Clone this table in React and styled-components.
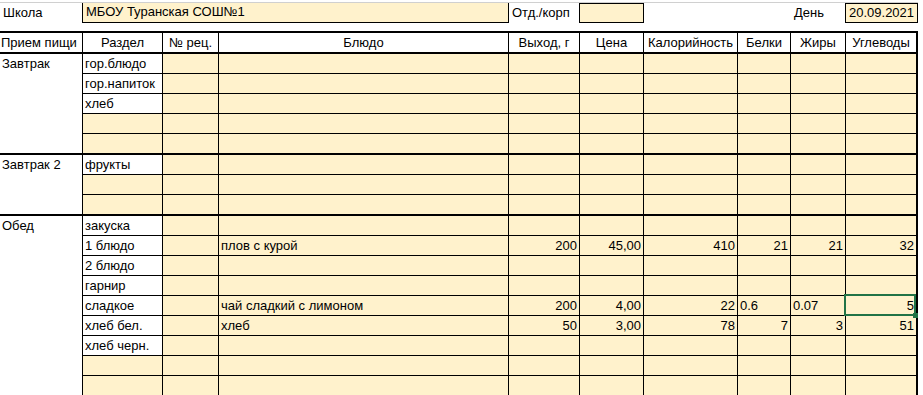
import React from "react";
import styled, { createGlobalStyle, css } from "styled-components";

const GlobalStyle = createGlobalStyle`
  html, body {
    margin: 0;
    padding: 0;
    background: #fff;
    overflow: hidden;
  }
  body {
    font-family: "Liberation Sans", Arial, sans-serif;
    font-size: 13px;
    color: #000;
  }
`;

const COLS = "83px 80px 56px 290px 71px 64px 94px 53px 55px 72px";
const BEIGE = "#fff2cc";

const Sheet = styled.div`
  width: 918px;
  border-top: 1px solid #d0d0d0;
  margin-top: 2px;
`;

const TopRow = styled.div`
  display: grid;
  grid-template-columns: COLS;
  grid-template-columns: ${COLS};
  height: 20px;
  margin-bottom: 8px;
`;

const Label = styled.div`
  box-sizing: border-box;
  line-height: 19px;
  padding: 0 3px;
  white-space: nowrap;
  ${(p) => p.$span && css`grid-column: span ${p.$span};`}
  ${(p) => p.$border && css`border-right: 1px solid #000;`}
`;

const Field = styled.div`
  box-sizing: border-box;
  background: ${BEIGE};
  border-bottom: 1px solid #000;
  border-right: 1px solid #000;
  ${(p) => p.$top && css`border-top: 1px solid #000;`}
  line-height: 18px;
  padding: 0 3px;
  white-space: nowrap;
  text-align: ${(p) => p.$align || "left"};
  ${(p) => p.$span && css`grid-column: span ${p.$span};`}
`;

const HeadRow = styled.div`
  display: grid;
  grid-template-columns: ${COLS};
  border-top: 2px solid #000;
  border-bottom: 2px solid #000;
  height: 23px;
  box-sizing: border-box;
`;

const HeadCell = styled.div`
  border-right: ${(p) => (p.$edge ? "2px" : "1px")} solid #000;
  line-height: 19px;
  text-align: ${(p) => (p.$left ? "left" : "center")};
  padding: 0 1px;
  white-space: nowrap;
  overflow: hidden;
`;

const Group = styled.div`
  display: grid;
  grid-template-columns: ${COLS};
  grid-template-rows: repeat(${(p) => p.$rows - 1}, 20px) 21px;
`;

const MealCell = styled.div`
  grid-row: span ${(p) => p.$rows};
  border-right: 1px solid #000;
  border-bottom: 2px solid #000;
  line-height: 19px;
  padding: 0 2px;
  white-space: nowrap;
`;

const Cell = styled.div`
  position: relative;
  box-sizing: border-box;
  background: ${(p) => (p.$fill ? BEIGE : "#fff")};
  border-right: ${(p) => (p.$edge ? "2px" : "1px")} solid #000;
  border-bottom: ${(p) => (p.$last ? "2px" : "1px")} solid #000;
  line-height: 19px;
  padding: 0 2px;
  white-space: nowrap;
  overflow: visible;
  text-align: ${(p) => p.$align || "left"};
  ${(p) =>
    p.$selected &&
    css`
      &::after {
        content: "";
        position: absolute;
        top: -2px;
        left: -2px;
        right: 0;
        bottom: -1px;
        border: 2px solid #217346;
        pointer-events: none;
      }
      &::before {
        content: "";
        position: absolute;
        right: -2px;
        bottom: -3px;
        width: 5px;
        height: 5px;
        background: #217346;
        z-index: 2;
      }
    `}
`;

const headers = [
  "Прием пищи",
  "Раздел",
  "№ рец.",
  "Блюдо",
  "Выход, г",
  "Цена",
  "Калорийность",
  "Белки",
  "Жиры",
  "Углеводы",
];

const groups = [
  {
    meal: "Завтрак",
    rows: [
      { section: "гор.блюдо" },
      { section: "гор.напиток" },
      { section: "хлеб" },
      {},
      {},
    ],
  },
  {
    meal: "Завтрак 2",
    rows: [{ section: "фрукты" }, {}, {}],
  },
  {
    meal: "Обед",
    rows: [
      { section: "закуска" },
      { section: "1 блюдо", dish: "плов с курой", vals: [200, "45,00", 410, 21, 21, 32] },
      { section: "2 блюдо" },
      { section: "гарнир" },
      {
        section: "сладкое",
        dish: "чай сладкий с лимоном",
        vals: [200, "4,00", 22, "0.6", "0.07", 5],
        selected: 5,
      },
      { section: "хлеб бел.", dish: "хлеб", vals: [50, "3,00", 78, 7, 3, 51] },
      { section: "хлеб черн." },
      {},
      {},
      {},
    ],
  },
];

const alignOf = (v, i) => {
  if (typeof v === "number") return "right";
  if (i === 1) return "right";
  return "left";
};

const Row = ({ row, last }) => {
  const vals = row.vals || ["", "", "", "", "", ""];
  return (
    <>
      <Cell $fill={!row.section} $last={last}>
        {row.section}
      </Cell>
      <Cell $fill $last={last} />
      <Cell $fill $last={last}>
        {row.dish}
      </Cell>
      {vals.map((v, i) => (
        <Cell
          key={i}
          $fill
          $last={last}
          $edge={i === 5}
          $align={alignOf(v, i)}
          $selected={row.selected === i}
        >
          {v}
        </Cell>
      ))}
    </>
  );
};

export default function App() {
  return (
    <>
      <GlobalStyle />
      <Sheet>
        <TopRow>
          <Label $border>Школа</Label>
          <Field $span={3}>МБОУ Туранская СОШ№1</Field>
          <Label $border>Отд./корп</Label>
          <Field $top />
          <Label $span={2} />
          <Label $border>День</Label>
          <Field $top $align="right">
            20.09.2021
          </Field>
        </TopRow>

        <HeadRow>
          {headers.map((h, i) => (
            <HeadCell key={h} $left={i === 0} $edge={i === headers.length - 1}>
              {h}
            </HeadCell>
          ))}
        </HeadRow>

        {groups.map((g) => (
          <Group key={g.meal} $rows={g.rows.length}>
            <MealCell $rows={g.rows.length}>{g.meal}</MealCell>
            {g.rows.map((r, i) => (
              <Row key={i} row={r} last={i === g.rows.length - 1} />
            ))}
          </Group>
        ))}
      </Sheet>
    </>
  );
}
